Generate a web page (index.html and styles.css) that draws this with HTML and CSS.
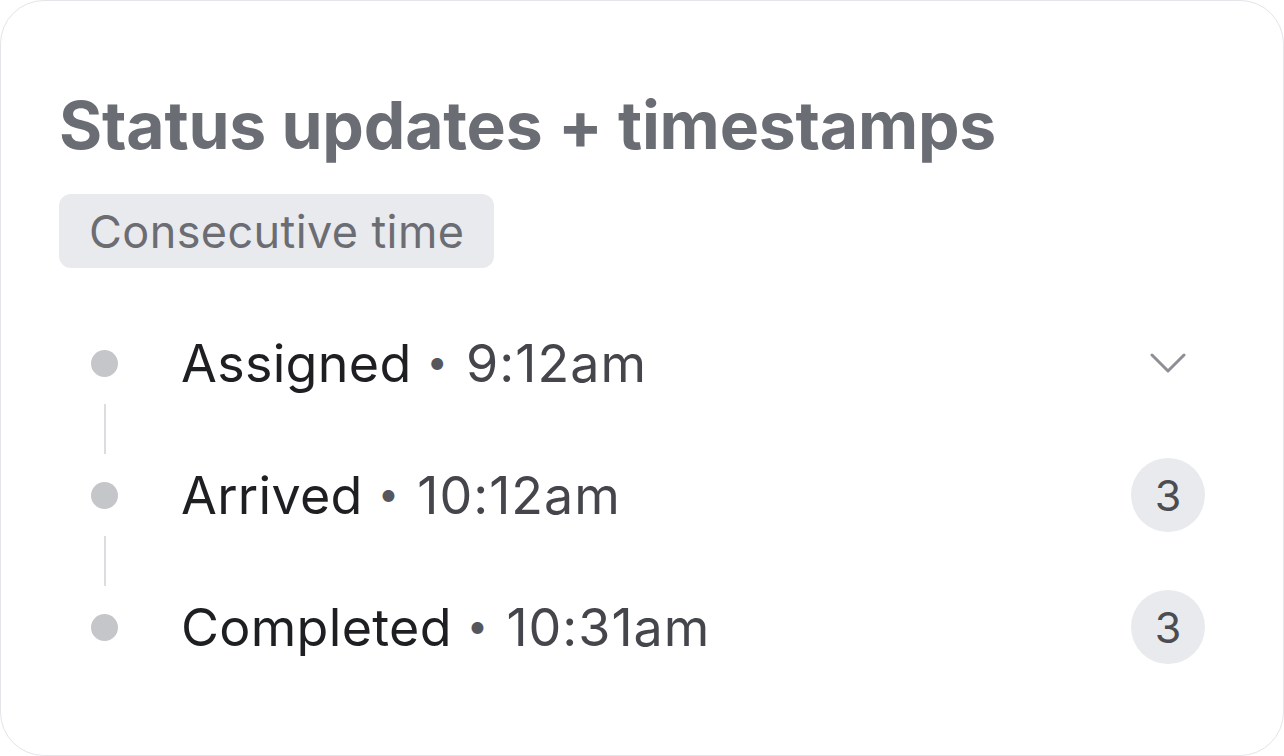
FILE: index.html
```html
<!DOCTYPE html>
<html lang="en">
<head>
<meta charset="utf-8">
<title>Status updates + timestamps</title>
<link rel="stylesheet" href="styles.css">
</head>
<body>
<main class="card">
  <h1 class="title">Status updates + timestamps</h1>
  <div class="tag">Consecutive time</div>
  <ol class="timeline">
    <li class="row">
      <span class="dot"></span>
      <span class="label">Assigned <span class="sep">•</span> <span class="time">9:12am</span></span>
      <span class="trail">
        <svg class="chevron" width="36" height="22" viewBox="0 0 36 22" aria-hidden="true">
          <polyline points="2,3 18,19 34,3" fill="none" stroke="#8e8f95" stroke-width="3" stroke-linecap="round" stroke-linejoin="round"/>
        </svg>
      </span>
    </li>
    <li class="connector"><span class="line"></span></li>
    <li class="row">
      <span class="dot"></span>
      <span class="label">Arrived <span class="sep">•</span> <span class="time">10:12am</span></span>
      <span class="trail"><span class="count">3</span></span>
    </li>
    <li class="connector"><span class="line"></span></li>
    <li class="row">
      <span class="dot"></span>
      <span class="label">Completed <span class="sep">•</span> <span class="time">10:31am</span></span>
      <span class="trail"><span class="count">3</span></span>
    </li>
  </ol>
</main>
</body>
</html>
```

FILE: styles.css
```css
* { box-sizing: border-box; }
html, body { margin: 0; padding: 0; background: #ffffff; }
body { font-family: Inter, "Noto Sans", "Liberation Sans", sans-serif; }

.card {
  width: 1284px;
  height: 756px;
  border: 1.5px solid #e4e4e9;
  border-radius: 44px;
  background: #ffffff;
  padding: 85px 78px 0 58px;
  display: flex;
  flex-direction: column;
  align-items: flex-start;
}

.title {
  margin: 0;
  font-size: 66px;
  line-height: 78px;
  font-weight: 700;
  color: #6b6d74;
  letter-spacing: -0.2px;
}

.tag {
  margin-top: 30px;
  height: 74px;
  padding: 0 30px;
  display: flex;
  align-items: center;
  background: #e9eaee;
  border-radius: 12px;
  font-size: 45px;
  color: #6c6d73;
  letter-spacing: 0.4px;
}

.timeline {
  list-style: none;
  margin: 58px 0 0 0;
  padding: 0;
  align-self: stretch;
  display: flex;
  flex-direction: column;
}

.row {
  height: 74px;
  display: flex;
  align-items: center;
}

.dot {
  width: 27px;
  height: 27px;
  border-radius: 50%;
  background: #c5c6ca;
  margin-left: 32px;
  flex: none;
}

.label {
  margin-left: 63px;
  font-size: 52px;
  color: #1e1f23;
  flex: 1;
  white-space: nowrap;
  letter-spacing: 0.3px;
}

.sep {
  color: #56575d;
  font-size: 38px;
  vertical-align: 0.16em;
  margin: 0 3px 0 0;
}

.time { color: #45464c; letter-spacing: 1px; }

.trail {
  width: 74px;
  display: flex;
  justify-content: center;
  align-items: center;
  flex: none;
}

.chevron { display: block; }

.count {
  width: 74px;
  height: 74px;
  border-radius: 50%;
  background: #e9eaee;
  display: flex;
  align-items: center;
  justify-content: center;
  font-size: 43px;
  color: #4c4d53;
}

.connector {
  height: 58px;
  display: flex;
  align-items: center;
}

.line {
  width: 2px;
  height: 50px;
  background: #dcdde1;
  margin-left: 45px;
}
```
